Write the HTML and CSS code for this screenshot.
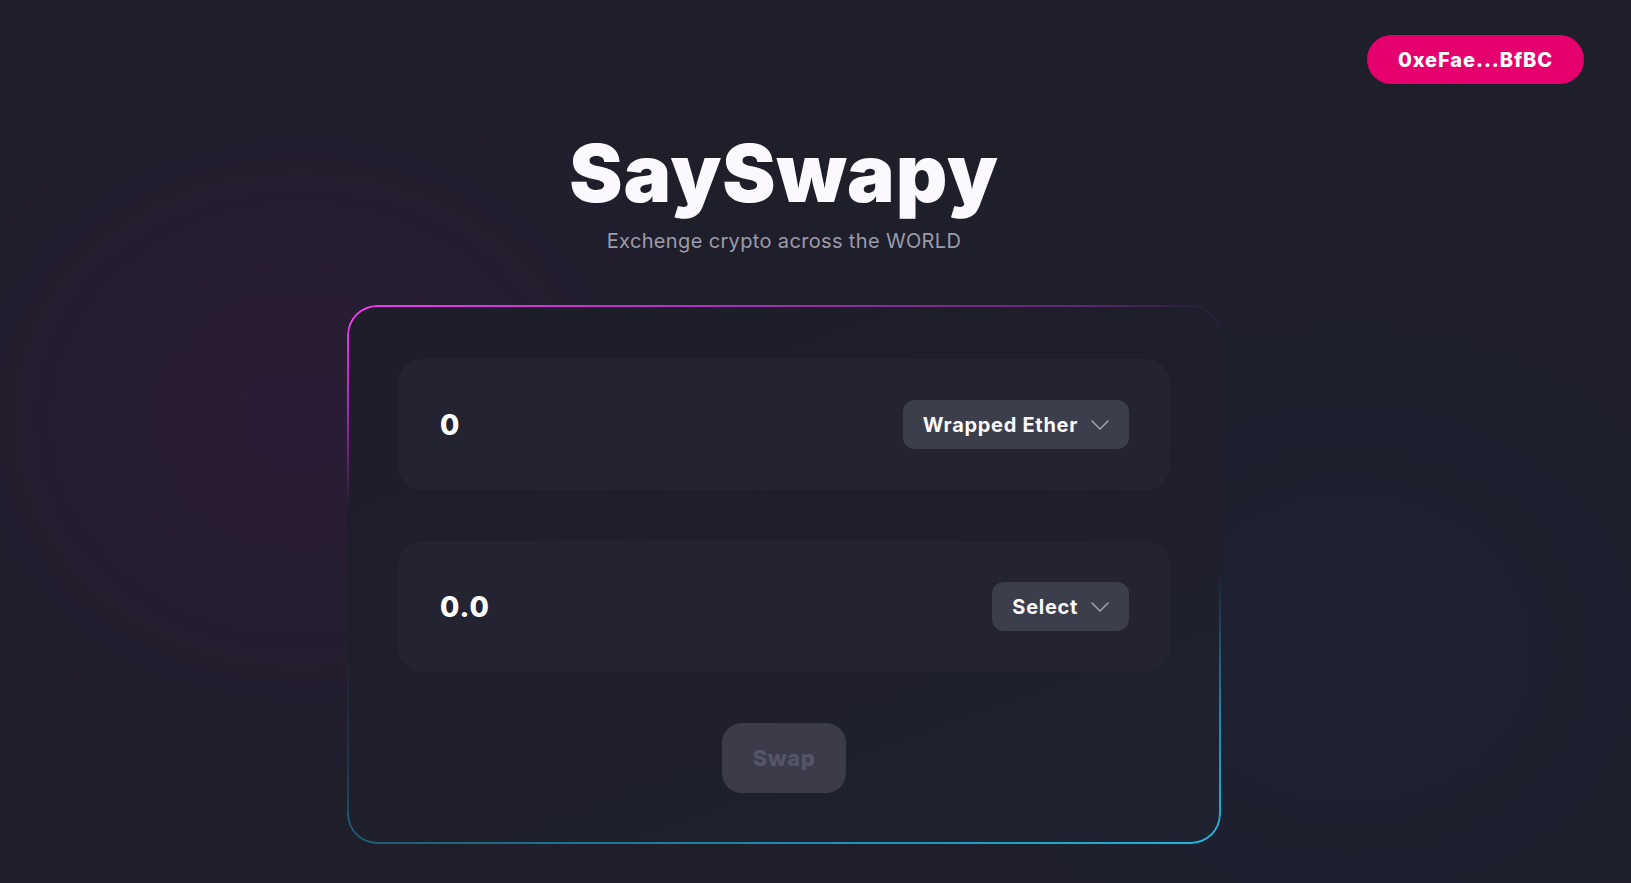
FILE: index.html
```html
<!DOCTYPE html>
<html lang="en">
<head>
<meta charset="utf-8">
<title>SaySwapy</title>
<link rel="stylesheet" href="styles.css">
</head>
<body>
<div class="page">
  <header class="topbar">
    <button class="wallet">0xeFae...BfBC</button>
  </header>
  <main class="main">
    <h1 class="title">SaySwapy</h1>
    <p class="subtitle">Exchenge crypto across the WORLD</p>
    <section class="card">
      <div class="panel">
        <span class="amount">0</span>
        <button class="token">Wrapped Ether
          <svg class="chev" width="18" height="10" viewBox="0 0 18 10"><path d="M1 1 L9 9 L17 1" fill="none" stroke="#a3a3ad" stroke-width="1.5" stroke-linecap="round" stroke-linejoin="round"/></svg>
        </button>
      </div>
      <div class="panel">
        <span class="amount">0.0</span>
        <button class="token">Select
          <svg class="chev" width="18" height="10" viewBox="0 0 18 10"><path d="M1 1 L9 9 L17 1" fill="none" stroke="#a3a3ad" stroke-width="1.5" stroke-linecap="round" stroke-linejoin="round"/></svg>
        </button>
      </div>
      <div class="actions">
        <button class="swap" disabled>Swap</button>
      </div>
    </section>
  </main>
</div>
</body>
</html>
```

FILE: styles.css
```css
* { box-sizing: border-box; }

html, body {
  margin: 0;
  height: 100%;
}

body {
  font-family: "Inter", "Noto Sans", sans-serif;
  color: #ffffff;
  background:
    radial-gradient(ellipse 600px 520px at 300px 420px, rgba(45, 28, 55, 0.85), rgba(45, 28, 55, 0) 75%),
    radial-gradient(ellipse 700px 600px at 1350px 650px, rgba(30, 35, 52, 0.7), rgba(30, 35, 52, 0) 75%),
    #1f1e2b;
  overflow: hidden;
}

.page {
  min-height: 100vh;
  display: flex;
  flex-direction: column;
}

.topbar {
  display: flex;
  justify-content: flex-end;
  padding: 35px 47px 0 0;
}

.wallet {
  height: 49px;
  width: 217px;
  border: none;
  border-radius: 999px;
  background: #e6006e;
  color: #fff;
  font-family: inherit;
  font-size: 20px;
  font-weight: 800;
  letter-spacing: 0.9px;
  cursor: pointer;
}

.main {
  display: flex;
  flex-direction: column;
  align-items: center;
  padding-right: 63px;
}

.title {
  margin: 49px 0 0;
  font-size: 80px;
  line-height: 1;
  font-weight: 900;
  letter-spacing: 0.9px;
  color: #fbf8ff;
}

.subtitle {
  margin: 16px 0 0;
  font-size: 20px;
  line-height: 24px;
  letter-spacing: 0.35px;
  color: #9c9bab;
}

.card {
  position: relative;
  margin-top: 52px;
  width: 874px;
  border-radius: 30px;
  padding: 54px 51px 51px;
  background: linear-gradient(160deg, #1e1d2a 0%, #1f1f2c 55%, #20222f 100%);
  display: flex;
  flex-direction: column;
  gap: 51px;
}

.card::before,
.card::after {
  content: "";
  position: absolute;
  inset: 0;
  border-radius: 30px;
  padding: 2px;
  pointer-events: none;
  -webkit-mask: linear-gradient(#000 0 0) content-box, linear-gradient(#000 0 0);
  -webkit-mask-composite: xor;
  mask: linear-gradient(#000 0 0) content-box exclude, linear-gradient(#000 0 0);
}

.card::before {
  background:
    linear-gradient(to right, #f23cf2 0%, #b030c0 40%, #5a2870 85%, rgba(70, 36, 90, 0) 100%) top left / 100% 2px no-repeat,
    linear-gradient(to bottom, #f23cf2 0%, #a02cb0 20%, rgba(80, 30, 100, 0) 38%) top left / 2px 100% no-repeat,
    linear-gradient(#f23cf2, #f23cf2) top left / 32px 32px no-repeat,
    radial-gradient(circle at 100% 0%, rgba(80, 40, 100, 0.5), rgba(80, 40, 100, 0) 32px) top right / 32px 32px no-repeat;
}

.card::after {
  background:
    linear-gradient(to left, #1eb6de 0%, #1c8fb4 45%, #1d5a74 100%) bottom left / 100% 2px no-repeat,
    linear-gradient(to top, #1eb6de 0%, #1a86aa 25%, rgba(30, 90, 120, 0) 50%) bottom right / 2px 100% no-repeat,
    linear-gradient(#1eb6de, #1eb6de) bottom right / 32px 32px no-repeat,
    linear-gradient(to top, #1d5a74 0%, rgba(29, 90, 116, 0.4) 40%, rgba(29, 90, 116, 0) 100%) bottom left / 2px 200px no-repeat,
    linear-gradient(#1d5a74, #1d5a74) bottom left / 32px 32px no-repeat;
}

.panel {
  height: 131px;
  border-radius: 24px;
  background: #242331;
  display: flex;
  align-items: center;
  justify-content: space-between;
  padding: 0 41px 0 42px;
}

.amount {
  font-size: 28px;
  font-weight: 800;
  color: #ffffff;
  letter-spacing: 1px;
}

.token {
  height: 49px;
  border: none;
  border-radius: 12px;
  background: #3d3e4b;
  color: #fbfbff;
  font-family: inherit;
  font-size: 20px;
  font-weight: 700;
  letter-spacing: 0.7px;
  display: flex;
  align-items: center;
  gap: 13px;
  padding: 0 20px 0 20px;
  cursor: pointer;
}

.chev {
  display: block;
  margin-top: 1px;
}

.actions {
  display: flex;
  justify-content: center;
}

.swap {
  width: 124px;
  height: 70px;
  border: none;
  border-radius: 20px;
  background: #3b3b4a;
  color: #555568;
  font-family: inherit;
  font-size: 22px;
  font-weight: 800;
  letter-spacing: 0.5px;
}
```
